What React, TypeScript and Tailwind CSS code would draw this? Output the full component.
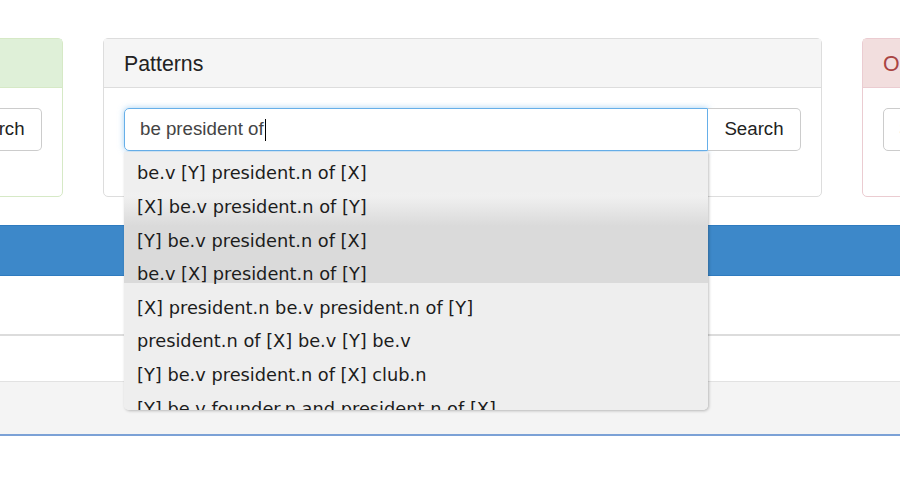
import React from 'react';

const suggestions = [
  'be.v [Y] president.n of [X]',
  '[X] be.v president.n of [Y]',
  '[Y] be.v president.n of [X]',
  'be.v [X] president.n of [Y]',
  '[X] president.n be.v president.n of [Y]',
  'president.n of [X] be.v [Y] be.v',
  '[Y] be.v president.n of [X] club.n',
  '[Y] be.v founder.n and president.n of [X]',
];

export default function App() {
  return (
    <div className="relative h-[500px] w-full overflow-hidden bg-white font-['Liberation_Sans',Arial,sans-serif] text-[#333]">
      {/* Search panels */}
      <div className="flex gap-10 pt-[38px] ml-[-197px]">
        {/* Left panel (cut off) */}
        <div className="w-[260px] shrink-0 rounded-[5px] border border-[#d6e9c6] bg-white">
          <div className="flex h-[49px] items-center border-b border-[#d6e9c6] bg-[#dff0d8] px-5 pt-[3px] text-[21.3px] text-[#3c763d]">
            Arguments
          </div>
          <div className="px-5 pt-5 pb-[45px]">
            <div className="flex h-[43px]">
              <div className="flex-1 rounded-l-[5px] border border-[#ccc]" />
              <div className="flex w-[93px] items-center justify-center rounded-r-[5px] border border-l-0 border-[#ccc] text-[18.7px] text-[#222]">
                Search
              </div>
            </div>
          </div>
        </div>

        {/* Patterns panel */}
        <div className="w-[719px] shrink-0 rounded-[5px] border border-[#ddd] bg-white">
          <div className="flex h-[49px] items-center border-b border-[#ddd] bg-[#f5f5f5] px-5 pt-[3px] text-[21.3px] text-[#222]">
            Patterns
          </div>
          <div className="px-5 pt-5 pb-[45px]">
            <div className="relative flex h-[43px]">
              <div className="flex flex-1 items-center rounded-l-[5px] border border-[#66afe9] pl-[15px] text-[18.7px] text-[#444] shadow-[0_0_6px_rgba(102,175,233,0.6)]">
                be president of
                <span className="ml-px h-[22px] w-px bg-black" />
              </div>
              <div className="flex w-[93px] items-center justify-center rounded-r-[5px] border border-l-0 border-[#ccc] bg-white text-[18.7px] text-[#222]">
                Search
              </div>

              {/* Autocomplete dropdown */}
              <div className="absolute left-0 top-[44px] z-10 h-[258px] w-[584px] overflow-hidden rounded-b-[5px] bg-[linear-gradient(to_bottom,#efefef_38px,#f0f0f0_44px,#dadada_74px,#dadada_131px,#eeeeee_131px)] pt-[5px] font-['DejaVu_Sans',Verdana,sans-serif] text-[17.8px] text-[#1c1c1c] shadow-[1px_1px_3px_rgba(0,0,0,0.25)]">
                {suggestions.map((s) => (
                  <div key={s} className="flex h-[33.6px] items-center whitespace-nowrap pl-[13px]">
                    {s}
                  </div>
                ))}
              </div>
            </div>
          </div>
        </div>

        {/* Right panel (cut off) */}
        <div className="w-[260px] shrink-0 rounded-[5px] border border-[#ebccd1] bg-white">
          <div className="flex h-[49px] items-center border-b border-[#ebccd1] bg-[#f2dede] px-5 pt-[3px] text-[21.3px] text-[#a94442]">
            Objects
          </div>
          <div className="px-5 pt-5 pb-[45px]">
            <div className="flex h-[43px]">
              <div className="flex flex-1 items-center rounded-l-[5px] border border-[#ccc] pl-[15px] text-[18.7px] text-[#aaa]">
                Search
              </div>
            </div>
          </div>
        </div>
      </div>

      {/* Blue bar */}
      <div className="mt-[28px] h-[51px] border-y border-[#2f7bbf] bg-[#3d88c9]" />

      {/* Lower rules */}
      <div className="mt-[58px] h-[47px] border-t-2 border-[#dcdcdc]" />
      <div className="h-[55px] border-t border-[#e2e2e2] border-b-2 border-b-[#7ba1d6] bg-[#f4f4f4]" />
    </div>
  );
}
